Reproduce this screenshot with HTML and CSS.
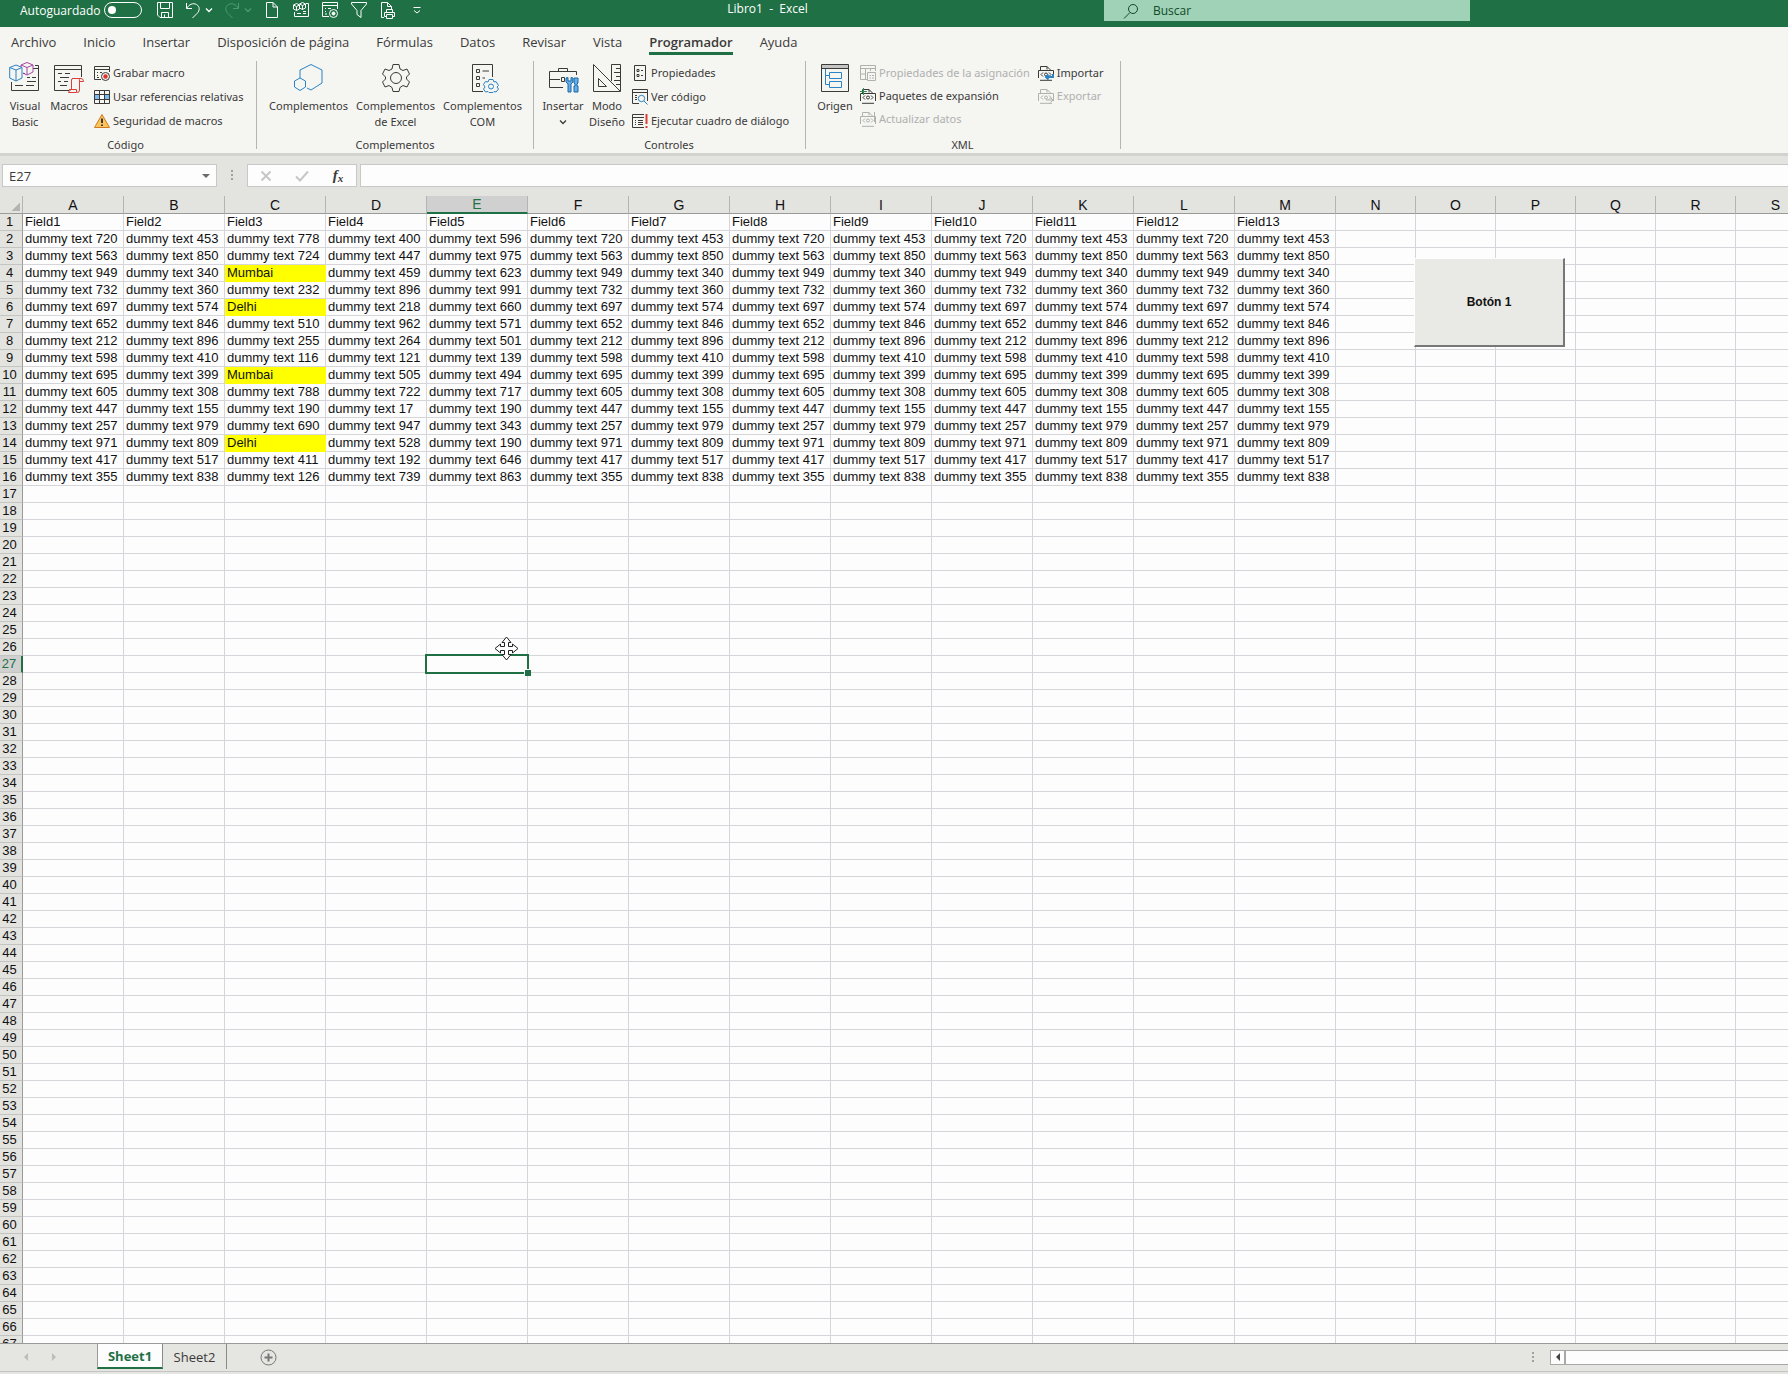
FILE: index.html
```
<!DOCTYPE html>
<html lang="es">
<head>
<meta charset="UTF-8">
<meta name="viewport" content="width=device-width, initial-scale=1.0">
<title>Libro1 - Excel</title>
<link rel="stylesheet" href="styles.css">
</head>
<body>
<svg class="defs" width="0" height="0" aria-hidden="true">
    <symbol id="xml-doc" viewBox="0 0 16 16">
        <path d="M2.500 5V1.500H9L12.500 5M9 1.500V4.500M0.500 13V5.500H15.500V13M2 15.300H14" fill="none" stroke="currentColor"/>
        <path d="M5 7.500L3 9.500L5 11.500M11 7.500L13 9.500L11 11.500" fill="none" stroke="currentColor"/>
        <circle cx="8" cy="9.500" r="1.500" fill="none" stroke="currentColor"/>
    </symbol>
    <symbol id="chevron" viewBox="0 0 8 8">
        <path d="M1 2.500L4 5.500L7 2.500" fill="none" stroke="currentColor" stroke-width="1.300"/>
    </symbol>
</svg>

<header class="titlebar">
    <div class="quick-access">
        <label class="autosave">Autoguardado <input type="checkbox" class="toggle"></label>
        <button class="qa-btn" aria-label="Guardar"><svg width="18" height="18" viewBox="0 0 18 18"><path d="M1.500 1.500H16.500V16.500H4L1.500 14ZM4.500 1.500V7.500H13.500V1.500M5.500 16.500V11.500H12.500V16.500M8.500 16V13.500"/></svg></button>
        <button class="qa-btn wide" aria-label="Deshacer"><svg width="16" height="18" viewBox="0 0 16 18"><path d="M1.500 2V7.500H7M1.800 7.200C4 3.500 8 1.500 11.500 3.500C15 5.500 15 9.500 12 12.500L7.500 17"/></svg><svg width="8" height="8"><use href="#chevron"/></svg></button>
        <button class="qa-btn wide" aria-label="Rehacer" disabled><svg width="16" height="18" viewBox="0 0 16 18"><path d="M14.500 2V7.500H9M14.200 7.200C12 3.500 8 1.500 4.500 3.500C1 5.500 1 9.500 4 12.500L8.500 17"/></svg><svg width="8" height="8"><use href="#chevron"/></svg></button>
        <button class="qa-btn" aria-label="Nuevo"><svg width="16" height="18" viewBox="0 0 16 18"><path d="M2.500 1.500H9L13.500 6V16.500H2.500ZM9 1.500V6H13.500"/></svg></button>
        <button class="qa-btn" aria-label="Visual Basic"><svg width="18" height="18" viewBox="0 0 18 18"><path d="M1.500 4L4.500 2.500L7.500 4V8L4.500 9.500L1.500 8ZM1.500 4L4.500 5.500L7.500 4M4.500 5.500V9.500M7.500 3L10.500 1.500L13.500 3V7L10.500 8.500L7.500 7M7.500 3L10.500 4.500L13.500 3M10.500 4.500V8.500M14 2.500H16.500V15.500H2.500V11M5 12.500H9M11 12.500H14M11 10.500H14"/></svg></button>
        <button class="qa-btn" aria-label="Grabar macro"><svg width="18" height="18" viewBox="0 0 18 18"><path d="M8 15.500H1.500V1.500H16.500V8M1.500 4.500H16.500M4 7.500H5M7 7.500H10M4 10.500H5M4 13H6"/><circle cx="12.500" cy="12.500" r="4"/><circle cx="12.500" cy="12.500" r="1.500" class="dot"/></svg></button>
        <button class="qa-btn" aria-label="Filtro"><svg width="18" height="18" viewBox="0 0 18 18"><path d="M1.500 1.500H16.500V3L11 9.500V16.500L7 13.500V9.500L1.500 3Z"/></svg></button>
        <button class="qa-btn" aria-label="Imprimir"><svg width="16" height="18" viewBox="0 0 16 18"><path d="M4 16.500H1.500V1.500H7.500L11.500 5.500V8M7.500 1.500V5.500H11.500M6.500 11V8.500H12.500V11M6 15.500H4.500V11.500H14.500V15.500H13M6.500 13.500H12.500V17.500H6.500Z"/></svg></button>
        <button class="qa-btn" aria-label="Personalizar"><svg width="10" height="10" viewBox="0 0 10 10"><path d="M1.500 2.500H8.500M2 5.500L5 8L8 5.500"/></svg></button>
    </div>
    <h1 class="doc-title">Libro1&nbsp; -&nbsp; Excel</h1>
    <label class="search">
        <svg width="16" height="16" viewBox="0 0 16 16"><circle cx="10" cy="6" r="4.500"/><path d="M7 9.500L1 15.500"/></svg>
        <input type="search" placeholder="Buscar" aria-label="Buscar">
    </label>
</header>

<nav class="tabs">
    <a href="#">Archivo</a>
    <a href="#">Inicio</a>
    <a href="#">Insertar</a>
    <a href="#">Disposición de página</a>
    <a href="#">Fórmulas</a>
    <a href="#">Datos</a>
    <a href="#">Revisar</a>
    <a href="#">Vista</a>
    <a href="#" class="active">Programador</a>
    <a href="#">Ayuda</a>
</nav>

<div class="ribbon">
    <section class="group code">
        <div class="tools">
            <button class="big"><svg width="32" height="32" viewBox="0 0 32 32"><path d="M26 4.500H29.500V29.500H2.500V21M24 7.500H29M18 16.500H21M23 16.500H27M18 20.500H27M6 24.500H14M17 24.500H25M14 12.500H16"/><path class="blue" d="M0.700 6.500L7 4L13 6.500V17L7 20L0.700 17ZM0.700 6.500L7 9L13 6.500M7 9V20"/><path class="purple" d="M12 4L18 1.500L24 4V11L18 14L14 12M12 4L18 6.500L24 4M18 6.500V14M12 4V6"/></svg><span>Visual Basic</span></button>
            <button class="big"><svg width="32" height="32" viewBox="0 0 32 32"><path d="M16 29.500H1.500V4.500H28.500V16M1.500 8.500H28.500M5 12.500H9M12 12.500H17M7 16.500H16M5 20.500H8M11 20.500H15M7 24.500H14"/><path class="red" d="M19 17.500H28Q30.500 17.500 30.500 20.500H26.500V29Q26.500 32 23.500 31.500H15.500Q16 29 18.500 28.500V19Q18.500 17.500 20 17.500M27 17.500Q26 18 26.500 21M16 28.500H23.500V31"/></svg><span>Macros</span></button>
            <div class="stack">
                <button><svg width="16" height="16" viewBox="0 0 16 16"><path d="M7 14.500H0.500V1.500H15.500V7M0.500 4.500H15.500M3 7.500H4M6 7.500H8M3 10.500H4M3 12.500H5"/><circle cx="11.500" cy="11.500" r="4"/><circle cx="11.500" cy="11.500" r="2.200" class="fill-red"/></svg>Grabar macro</button>
                <button><svg width="16" height="16" viewBox="0 0 16 16"><path class="fill-blue" d="M1 6H15V11H1Z"/><path class="fill-white" d="M6 6H10V11H6Z"/><path d="M0.500 1.500H15.500V14.500H0.500ZM0.500 5.500H15.500M0.500 10.500H15.500M5.500 1.500V14.500M10.500 1.500V14.500"/></svg>Usar referencias relativas</button>
                <button><svg width="16" height="16" viewBox="0 0 16 16"><path class="warn" d="M8 1.500L15.500 14.500H0.500Z"/><path class="heavy" d="M8 5.500V10M8 11.500V13"/></svg>Seguridad de macros</button>
            </div>
        </div>
        <h2>Código</h2>
    </section>
    <section class="group addins">
        <div class="tools">
            <button class="big"><svg width="32" height="32" viewBox="0 0 32 32"><path class="blue" d="M7 17V9L18 3.500L29 9V22L18 29L14 27"/><path class="blue" d="M7 17L12.500 20V26L7 29.500L1.500 26V20Z"/></svg><span>Complementos</span></button>
            <button class="big"><svg width="32" height="32" viewBox="0 0 32 32"><path d="M13 3.500H19L20 8L23 9.500L27 8L29.500 13L26.500 16V18L29.500 21L27 26L23 24.500L20 26.500L19 30.500H13L12 26.500L9 24.500L5 26L2.500 21L5.500 18V16L2.500 13L5 8L9 9.500L12 8Z"/><circle cx="16" cy="17" r="5.500"/></svg><span>Complementos de Excel</span></button>
            <button class="big"><svg width="32" height="32" viewBox="0 0 32 32"><path d="M16 30.500H5.500V3.500H25.500V16M9.500 8.500H12.500V11.500H9.500ZM9.500 15.500H12.500V18.500H9.500ZM9.500 22.500H12.500V25.500H9.500ZM15.500 10H22M15.500 17H18"/><path class="blue" d="M22 18.500H26L27 21L29 20.500L31.500 24.500L30 26L31.500 28L29 31L27 30.500L26 31.500H22L21 30.500L18.500 31L16.500 28L18 26L16.500 23.500L18.500 20.500L21 21Z"/><circle class="blue" cx="24" cy="25.500" r="2.500"/></svg><span>Complementos COM</span></button>
        </div>
        <h2>Complementos</h2>
    </section>
    <section class="group controls">
        <div class="tools">
            <button class="big"><svg width="32" height="32" viewBox="0 0 32 32"><path d="M16 26.500H2.500V10.500H29.500V14M11.500 10V7.500H20.500V10M2.500 18.500H13M14.500 16.500H17.500V20.500H14.500Z"/><path class="fill-steel" d="M19 17V21L21 23V31H24V23L26 21V17L24 16.500V20H21V16.500ZM27 17H31V22L30 23V25H31V31H27V25H28V23L27 22Z"/></svg><span>Insertar</span><svg width="8" height="8"><use href="#chevron"/></svg></button>
            <button class="big"><svg width="32" height="32" viewBox="0 0 32 32"><path d="M2.500 3.500L29.500 30.500H2.500ZM7.500 17.500L15.500 25.500H7.500ZM20.500 20V3.500H29.500V30M25 7.500H29M23 11.500H29M25 15.500H29M23 19.500H29M25 23.500H29"/></svg><span>Modo Diseño</span></button>
            <div class="stack">
                <button><svg width="16" height="16" viewBox="0 0 16 16"><path d="M2.500 0.500H13.500V15.500H2.500ZM5 4.500H7V6.500H5ZM5 9.500H7V11.500H5ZM9 5.500H11M9 10.500H11"/></svg>Propiedades</button>
                <button><svg width="16" height="16" viewBox="0 0 16 16"><path d="M7 14.500H0.500V0.500H15.500V12M0.500 3.500H15.500M3 6.500H5M3 8.500H5M3 10.500H5"/><circle class="blue" cx="9.500" cy="9.500" r="3.200"/><path class="blue" d="M12 12L15.500 15.500"/></svg>Ver código</button>
                <button><svg width="16" height="16" viewBox="0 0 16 16"><path d="M12 14.500H0.500V1.500H12M0.500 4.500H12M3 7.500H4M6 7.500H11M3 9.500H4M6 9.500H11M3 11.500H4M6 11.500H11"/><path class="red heavy" d="M14.500 1V11M14.500 13V15"/></svg>Ejecutar cuadro de diálogo</button>
            </div>
        </div>
        <h2>Controles</h2>
    </section>
    <section class="group xml">
        <div class="tools">
            <button class="big"><svg width="32" height="32" viewBox="0 0 32 32"><path class="fill-grey" d="M3 4H29V7H3Z"/><path d="M2.500 3.500H29.500V30.500H2.500ZM2.500 7.500H29.500"/><path class="blue" d="M10.500 11.500H22.500V17.500H10.500ZM10.500 20.500H22.500V26.500H10.500ZM6.500 8V23.500H10M6.500 14.500H10"/></svg><span>Origen</span></button>
            <div class="stack tight">
                <button disabled><svg width="16" height="16" viewBox="0 0 16 16"><path d="M7 14.500H0.500V0.500H15.500V6M0.500 3.500H15.500M0.500 9H6M5.500 3.500V14M10.500 3.500V6M7.500 7.500H15.500V15.500H7.500ZM9.500 10.500H11M12 10.500H14M9.500 13H11M12 13H14"/></svg>Propiedades de la asignación</button>
                <button><svg width="16" height="16" viewBox="0 0 16 16"><use href="#xml-doc"/><path class="green" d="M3.500 0V7M0 3.500H7"/></svg>Paquetes de expansión</button>
                <button disabled><svg width="16" height="16" viewBox="0 0 16 16"><use href="#xml-doc"/><path d="M14.500 1V11"/></svg>Actualizar datos</button>
            </div>
            <div class="stack tight imports">
                <button><svg width="16" height="16" viewBox="0 0 16 16"><use href="#xml-doc"/><path class="blue heavy" d="M15 9V12H8M10.500 9.500L8 12L10.500 14.500"/></svg>Importar</button>
                <button disabled><svg width="16" height="16" viewBox="0 0 16 16"><use href="#xml-doc"/><path d="M8 12H15M12.500 9.500L15 12L12.500 14.500"/></svg>Exportar</button>
            </div>
        </div>
        <h2>XML</h2>
    </section>
</div>

<div class="formula-bar">
    <div class="name-box">
        <input type="text" value="E27" aria-label="Cuadro de nombres">
        <button aria-label="Lista de nombres"><svg width="8" height="4" viewBox="0 0 8 4"><path d="M0 0H8L4 4Z"/></svg></button>
    </div>
    <span class="grip"></span>
    <div class="formula-actions">
        <button aria-label="Cancelar" disabled><svg width="12" height="12" viewBox="0 0 12 12"><path d="M1.500 1.500L10.500 10.500M10.500 1.500L1.500 10.500"/></svg></button>
        <button aria-label="Introducir" disabled><svg width="14" height="12" viewBox="0 0 14 12"><path d="M1 6.500L5 10.500L13 1.500"/></svg></button>
        <button class="fx" aria-label="Insertar función">f<small>x</small></button>
    </div>
    <input type="text" class="formula" aria-label="Barra de fórmulas">
</div>

<main class="sheet">
    <table id="grid"></table>
    <button class="sheet-button">Botón 1</button>
    <svg class="cursor" width="25" height="25" viewBox="0 0 25 25"><path d="M12.500 1L17 6.500H14.500V10.500H18.500V8L24 12.500L18.500 17V14.500H14.500V18.500H17L12.500 24L8 18.500H10.500V14.500H6.500V17L1 12.500L6.500 8V10.500H10.500V6.500H8Z"/></svg>
</main>

<footer class="sheet-bar">
    <div class="sheet-nav">
        <button aria-label="Anterior" disabled><svg width="4" height="8" viewBox="0 0 4 8"><path d="M4 0V8L0 4Z"/></svg></button>
        <button aria-label="Siguiente" disabled><svg width="4" height="8" viewBox="0 0 4 8"><path d="M0 0V8L4 4Z"/></svg></button>
    </div>
    <button class="sheet-tab active">Sheet1</button>
    <button class="sheet-tab">Sheet2</button>
    <button class="add-sheet" aria-label="Hoja nueva"><svg width="17" height="17" viewBox="0 0 17 17"><circle cx="8.500" cy="8.500" r="7.500"/><path class="heavy" d="M8.500 4.500V12.500M4.500 8.500H12.500"/></svg></button>
    <span class="grip"></span>
    <div class="scrollbar">
        <button aria-label="Desplazar a la izquierda"><svg width="4" height="8" viewBox="0 0 4 8"><path d="M4 0V8L0 4Z"/></svg></button>
        <div class="track"></div>
    </div>
</footer>

<script src="script.js"></script>
</body>
</html>
```
FILE: styles.css
```
* {
    box-sizing: border-box;
}

body {
    margin: 0;
    height: 100vh;
    display: flex;
    flex-direction: column;
    overflow: hidden;
    background-color: #e5e5e2;
    color: #3b3a38;
    font-family: "Open Sans", "Noto Sans", sans-serif;
    font-size: 12px;
}

button,
input {
    font: inherit;
    color: inherit;
    background: none;
    border: none;
    border-radius: 0;
    margin: 0;
    padding: 0;
}

input:focus {
    outline: none;
}

svg {
    display: block;
    flex: none;
    fill: none;
    stroke: currentColor;
}

.defs {
    position: absolute;
}

/* title bar */
.titlebar {
    display: flex;
    align-items: flex-start;
    height: 27px;
    flex: none;
    background-color: #1f7145;
    color: #fff;
}

.quick-access {
    display: flex;
    align-items: center;
    height: 20px;
    padding-left: 20px;
}

.autosave {
    display: flex;
    align-items: center;
    justify-content: space-between;
    width: 122px;
    margin-right: 8px;
}

.toggle {
    appearance: none;
    width: 38px;
    height: 16px;
    border: 1px solid #fff;
    border-radius: 8px;
    display: flex;
    align-items: center;
    padding-left: 3px;
}

.toggle::before {
    content: "";
    width: 8px;
    height: 8px;
    border-radius: 50%;
    background-color: #fff;
}

.qa-btn {
    width: 29px;
    height: 20px;
    display: flex;
    align-items: center;
    justify-content: center;
    gap: 4px;
}

.qa-btn.wide {
    width: 39px;
}

.qa-btn:disabled {
    color: #4f9a6e;
}

.dot {
    fill: currentColor;
}

.doc-title {
    flex: 1;
    margin: 0;
    font-size: 12px;
    font-weight: normal;
    line-height: 18px;
    text-align: center;
}

.search {
    display: flex;
    align-items: center;
    gap: 14px;
    width: 366px;
    height: 21px;
    margin-right: 318px;
    padding-left: 19px;
    background-color: #9fd2b6;
    color: #0f4a2a;
}

.search input {
    flex: 1;
}

.search input::placeholder {
    color: #0f4a2a;
    opacity: 1;
}

/* ribbon */
.tabs {
    display: flex;
    gap: 27px;
    height: 33px;
    flex: none;
    padding: 4px 11px 0;
    background-color: #f5f5f2;
}

.tabs a {
    height: 24px;
    line-height: 22px;
    font-size: 13px;
    color: inherit;
    text-decoration: none;
}

.tabs .active {
    font-weight: 600;
    border-bottom: 3px solid #1f7145;
}

.ribbon {
    display: flex;
    flex: none;
    height: 93px;
    padding-top: 1px;
    padding-bottom: 4px;
    background-color: #f5f5f2;
    font-family: "Noto Sans", "Open Sans", sans-serif;
    font-size: 11px;
}

.group {
    display: flex;
    flex-direction: column;
    justify-content: space-between;
    border-right: 1px solid #b5b5b2;
}

.code {
    width: 257px;
    padding-left: 3px;
}

.addins {
    width: 277px;
    padding-left: 8px;
}

.controls {
    width: 272px;
    padding-left: 7px;
}

.xml {
    width: 315px;
    padding-left: 7px;
}

.group h2 {
    margin: 0;
    padding-right: 8px;
    font-size: 11px;
    font-weight: normal;
    line-height: 8px;
    text-align: center;
}

.tools {
    display: flex;
    white-space: nowrap;
}

.big {
    width: 44px;
    display: flex;
    flex-direction: column;
    align-items: center;
    line-height: 16px;
}

.big span {
    white-space: normal;
    padding-top: 5px;
}

.big svg + span + svg {
    margin-top: 4px;
}

.addins .big {
    width: 87px;
}

.stack {
    display: flex;
    flex-direction: column;
    padding-left: 3px;
}

.stack button {
    display: flex;
    align-items: center;
    gap: 3px;
    height: 24px;
    line-height: 16px;
}

.stack.tight button {
    height: 23px;
}

.imports {
    padding-left: 8px;
}

.ribbon button:disabled {
    color: #b0b0ae;
}

.blue {
    stroke: #2b83c4;
}

.purple {
    stroke: #a548a8;
}

.red {
    stroke: #d9403a;
}

.green {
    stroke: #2a9151;
}

.heavy {
    stroke-width: 2;
}

.fill-red {
    fill: #e0322c;
    stroke: none;
}

.fill-blue {
    fill: #7dbcf0;
    stroke: none;
}

.fill-white {
    fill: #fff;
    stroke: none;
}

.fill-grey {
    fill: #c4c4c2;
    stroke: none;
}

.fill-steel {
    fill: #62aee8;
    stroke: #1b68a8;
}

.warn {
    fill: #fbc45c;
    stroke: #cf7a1c;
}

/* formula bar */
.formula-bar {
    display: flex;
    flex: none;
    height: 43px;
    padding: 8px 0 9px 2px;
    background-color: #e3e3e0;
    border-top: 3px solid #d2d2d0;
}

.name-box,
.formula-actions,
.formula {
    height: 23px;
    background-color: #fdfdfe;
    border: 1px solid #c8c8c6;
}

.name-box {
    display: flex;
    align-items: center;
    width: 215px;
    padding: 0 6px;
}

.name-box input {
    flex: 1;
    min-width: 0;
    font-size: 13px;
}

.name-box button {
    color: #6a6a68;
}

.name-box svg,
.sheet-nav svg,
.scrollbar svg {
    fill: currentColor;
    stroke: none;
}

.grip {
    width: 2px;
    height: 10px;
    background: repeating-linear-gradient(#a0a09e 0 2px, transparent 2px 4px);
}

.formula-bar .grip {
    margin: 6px 14px;
}

.formula-actions {
    display: flex;
    width: 110px;
    margin-right: 3px;
}

.formula-actions button {
    flex: 1;
    display: flex;
    align-items: center;
    justify-content: center;
}

.formula-actions svg {
    stroke-width: 2;
}

.formula-actions button:disabled {
    color: #c6c6c6;
}

.formula-actions .fx {
    font: italic bold 15px "Liberation Serif", serif;
}

.fx small {
    font-size: 11px;
    padding-top: 4px;
}

.formula {
    flex: 1;
    border-right: none;
    padding: 0 6px;
}

/* sheet */
.sheet {
    position: relative;
    flex: 1;
    min-height: 0;
    overflow: hidden;
    background-color: #fdfdfe;
    color: #111;
    font-family: "Liberation Sans", Arial, sans-serif;
    font-size: 13px;
}

#grid {
    table-layout: fixed;
    width: 0;
    border-collapse: separate;
    border-spacing: 0;
}

.col-rows {
    width: 23px;
}

.col-data {
    width: 101px;
}

.col-empty {
    width: 80px;
}

#grid th,
#grid td {
    height: 17px;
    padding: 0;
    line-height: 16px;
    white-space: nowrap;
}

#grid td {
    padding-left: 2px;
    border-right: 1px solid #d6d6da;
    border-bottom: 1px solid #d6d6da;
}

#grid th {
    font-weight: normal;
    background-color: #e3e3e0;
}

#grid thead th {
    height: 18px;
    line-height: 16px;
    font-size: 14px;
    border-right: 1px solid #b4b4b2;
    border-bottom: 1px solid #9a9a98;
}

#grid tbody th {
    padding-right: 3px;
    border-right: 1px solid #9a9a98;
    border-bottom: 1px solid #c4c4c2;
}

#grid thead .corner {
    background: linear-gradient(135deg, transparent 50%, #b4b4b2 50%) 11px 6px / 9px 9px no-repeat #e3e3e0;
}

#grid thead .current,
#grid tbody .current {
    background-color: #d0d0d0;
    color: #1f7145;
}

#grid thead .current {
    border-bottom: 2px solid #1f7145;
}

#grid tbody .current {
    border-right: 2px solid #1f7145;
}

#grid .found {
    background-color: #ff0;
    border-color: #ff0;
}

#grid .selected {
    position: relative;
}

.selected::before {
    content: "";
    position: absolute;
    inset: -2px;
    border: 2px solid #1f7145;
}

.selected::after {
    content: "";
    position: absolute;
    right: -4px;
    bottom: -4px;
    width: 6px;
    height: 6px;
    background-color: #1f7145;
    border-top: 1px solid #fff;
    border-left: 1px solid #fff;
}

.sheet-button {
    position: absolute;
    left: 1414px;
    top: 62px;
    width: 151px;
    height: 89px;
    background-color: #e9e9e5;
    border: 1px solid #fff;
    border-right: 2px solid #777;
    border-bottom: 2px solid #777;
    font-size: 12px;
    font-weight: bold;
}

.cursor {
    position: absolute;
    left: 494px;
    top: 440px;
    fill: #fff;
    stroke: #222;
}

/* bottom bar */
.sheet-bar {
    display: flex;
    align-items: center;
    flex: none;
    height: 31px;
    padding-bottom: 4px;
    border-top: 1px solid #9a9a98;
    background: linear-gradient(#c4c4c2, #c4c4c2) 0 27px / 100% 1px no-repeat #e5e5e2;
}

.sheet-nav {
    display: flex;
    width: 97px;
    padding-left: 12px;
}

.sheet-nav button {
    display: flex;
    justify-content: center;
    width: 28px;
    color: #bcbcba;
}

.sheet-tab {
    align-self: flex-start;
    width: 64px;
    height: 25px;
    font-size: 13px;
    border-right: 1px solid #8a8a88;
}

.sheet-tab.active {
    width: 66px;
    font-weight: bold;
    color: #1f7145;
    background-color: #fdfdfe;
    border-left: 1px solid #9a9a98;
    border-bottom: 2px solid #1f7145;
}

.add-sheet {
    margin: 0 auto 0 33px;
    color: #777;
}

.scrollbar {
    display: flex;
    width: 238px;
    height: 15px;
    margin-left: 16px;
    border: 1px solid #a8a8a6;
    border-right: none;
    background-color: #fdfdfe;
}

.scrollbar button {
    display: flex;
    align-items: center;
    justify-content: center;
    width: 15px;
    color: #444;
    border-right: 2px solid #a8a8a6;
}

.track {
    flex: 1;
}
```
FILE: script.js
```
const grid = document.getElementById('grid');
const dataCols = 13;
const emptyCols = 6;
const rowCount = 67;
const currentCell = { col: 4, row: 27 };

const a = [720, 563, 949, 732, 697, 652, 212, 598, 695, 605, 447, 257, 971, 417, 355];
const b = [453, 850, 340, 360, 574, 846, 896, 410, 399, 308, 155, 979, 809, 517, 838];
const c = [778, 724, 'Mumbai', 232, 'Delhi', 510, 255, 116, 'Mumbai', 788, 190, 690, 'Delhi', 411, 126];
const d = [400, 447, 459, 896, 218, 962, 264, 121, 505, 722, 17, 947, 528, 192, 739];
const e = [596, 975, 623, 991, 660, 571, 501, 139, 494, 717, 190, 343, 190, 646, 863];
const columns = [a, b, c, d, e, a, b, a, b, a, b, a, b];

function makeCell(col, row) {
    const td = document.createElement('td');
    if (col < dataCols && row === 1) {
        td.textContent = `Field${col + 1}`;
    } else if (col < dataCols && row <= a.length + 1) {
        const value = columns[col][row - 2];
        if (typeof value === 'string') {
            td.textContent = value;
            td.className = 'found';
        } else {
            td.textContent = `dummy text ${value}`;
        }
    }
    if (col === currentCell.col && row === currentCell.row) {
        td.className = 'selected';
    }
    return td;
}

function makeHeader(text, isCurrent) {
    const th = document.createElement('th');
    th.textContent = text;
    if (isCurrent) th.className = 'current';
    return th;
}

// column widths
const colgroup = document.createElement('colgroup');
colgroup.innerHTML = '<col class="col-rows">' +
    '<col class="col-data">'.repeat(dataCols) +
    '<col class="col-empty">'.repeat(emptyCols);
grid.appendChild(colgroup);

// column letters
const headRow = grid.createTHead().insertRow();
const corner = makeHeader('', false);
corner.className = 'corner';
headRow.appendChild(corner);
for (let col = 0; col < dataCols + emptyCols; col++) {
    headRow.appendChild(makeHeader(String.fromCharCode(65 + col), col === currentCell.col));
}

// rows
const body = grid.createTBody();
for (let row = 1; row <= rowCount; row++) {
    const tr = body.insertRow();
    tr.appendChild(makeHeader(row, row === currentCell.row));
    for (let col = 0; col < dataCols + emptyCols; col++) {
        tr.appendChild(makeCell(col, row));
    }
}
```
